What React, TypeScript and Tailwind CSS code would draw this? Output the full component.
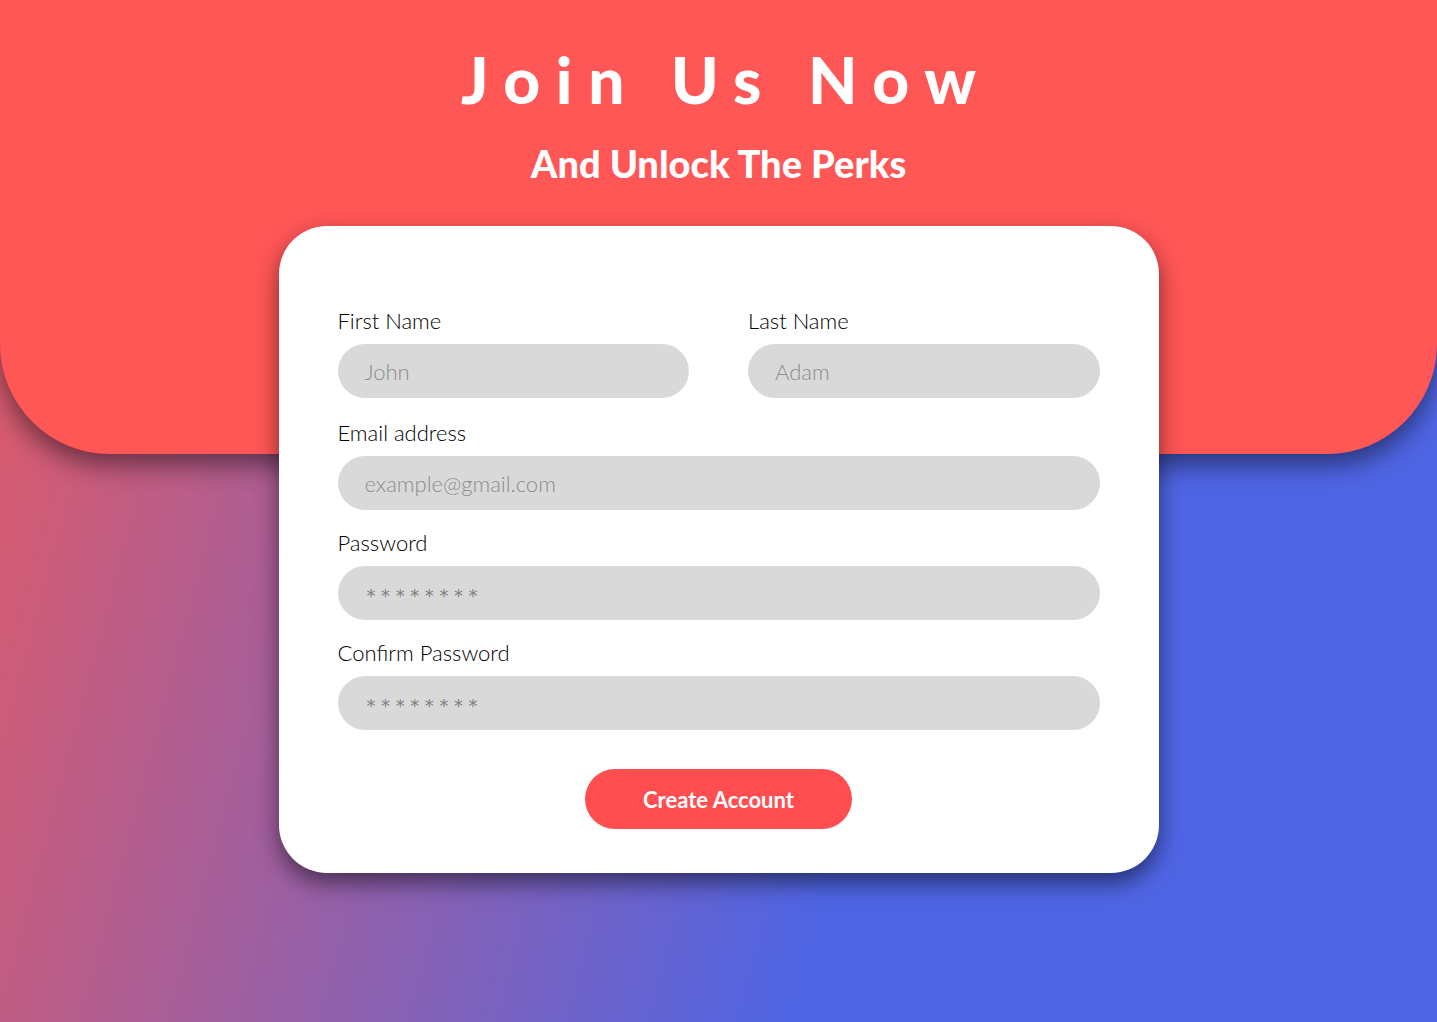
import React from 'react';

const font = { fontFamily: 'Lato, "Open Sans", sans-serif' };

function Field({ label, placeholder, stars }: { label: string; placeholder: string; stars?: boolean }) {
    return (
        <label className="flex flex-col">
            <span className="text-[22px] leading-[26px] font-light text-black mb-[10px]">{label}</span>
            <input
                type="text"
                placeholder={placeholder}
                className={
                    'h-[54px] w-full rounded-full bg-[#d9d9d9] outline-none text-[#333] ' +
                    (stars
                        ? "pl-[29px] pt-[4px] text-[18px] tracking-[0.31em] font-['DejaVu_Sans',sans-serif] placeholder:text-[#808080]"
                        : 'px-[27px] text-[22px] font-light placeholder:text-[#8c8c8c]')
                }
            />
        </label>
    );
}

export default function App() {
    return (
        <div
            className="min-h-screen w-full overflow-hidden bg-[linear-gradient(105deg,#e85a62_0%,#4f65e4_62%)]"
            style={font}
        >
            {/* red header */}
            <header className="h-[454px] bg-[#ff5656] rounded-b-[110px] shadow-[0_12px_24px_rgba(0,0,0,0.45)] flex flex-col items-center pt-[40px]">
                <h1 className="text-[64px] leading-[80px] font-black text-white tracking-[0.245em] pl-[0.245em]">
                    Join Us Now
                </h1>
                <h2 className="mt-[20px] text-[38px] leading-[46px] font-black text-white">And Unlock The Perks</h2>
            </header>

            {/* form card */}
            <main className="relative z-10 -mt-[228px] mx-auto w-[880px] rounded-[48px] bg-white shadow-[0_10px_22px_rgba(0,0,0,0.5)] px-[59px] pt-[82px] pb-[44px]">
                <div className="flex flex-col gap-[20px]">
                    <div className="grid grid-cols-2 gap-[59px] mb-[2px]">
                        <Field label="First Name" placeholder="John" />
                        <Field label="Last Name" placeholder="Adam" />
                    </div>
                    <Field label="Email address" placeholder="example@gmail.com" />
                    <Field label="Password" placeholder="********" stars />
                    <Field label="Confirm Password" placeholder="********" stars />
                </div>
                <div className="flex justify-center mt-[39px]">
                    <button className="h-[60px] w-[267px] rounded-full bg-[#ff4d50] text-white text-[22px] font-bold">
                        Create Account
                    </button>
                </div>
            </main>
        </div>
    );
}
